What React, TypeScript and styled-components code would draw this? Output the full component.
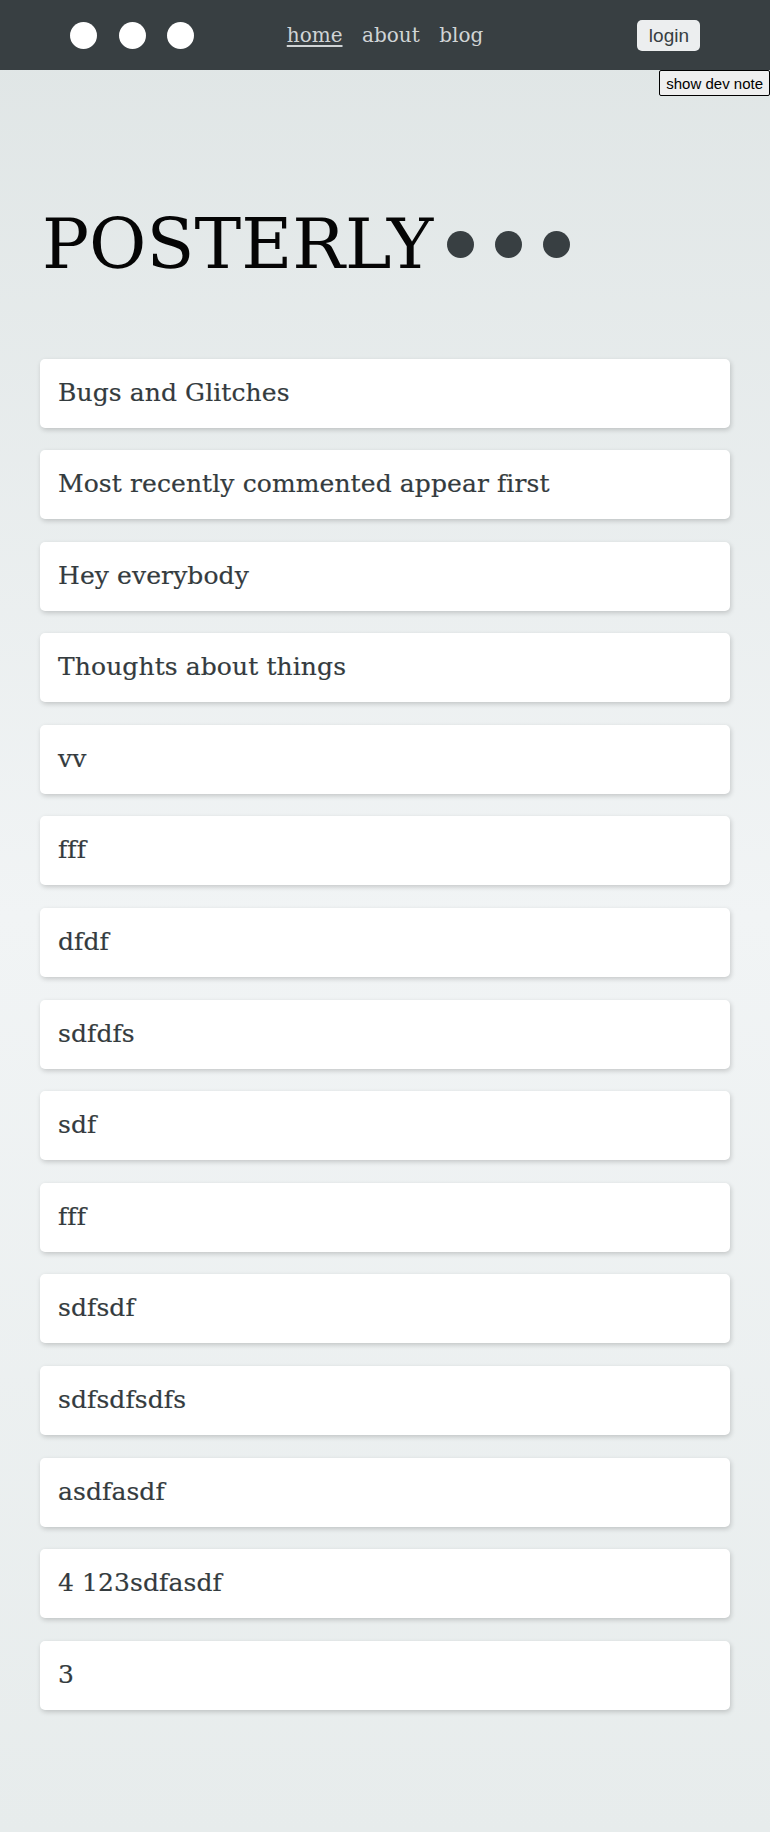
import React from "react";
import styled, { createGlobalStyle } from "styled-components";

const GlobalStyle = createGlobalStyle`
  html, body { margin: 0; padding: 0; }
  body {
    font-family: "DejaVu Serif", serif;
    background: #e6ebeb;
  }
  * { box-sizing: border-box; }
`;

const Page = styled.div`
  position: relative;
  min-height: 100vh;
  background: linear-gradient(180deg, #dfe5e5 0%, #f1f4f5 50%, #e7ecec 100%);
`;

const Header = styled.header`
  height: 70px;
  background: #383f42;
  display: grid;
  grid-template-columns: 1fr auto 1fr;
  align-items: center;
  padding: 0 70px;
`;

const Dots = styled.div<{ $gap?: number }>`
  display: flex;
  align-items: center;
  gap: ${(p) => p.$gap ?? 21.5}px;
`;

const Dot = styled.span<{ $color: string }>`
  display: block;
  width: 27px;
  height: 27px;
  border-radius: 50%;
  background: ${(p) => p.$color};
`;

const Nav = styled.nav`
  display: flex;
  gap: 19.5px;
  margin-left: 0;
  font-family: "DejaVu Serif", serif;
  font-size: 20px;
`;

const NavLink = styled.a<{ $active?: boolean }>`
  color: #d0d4d6;
  text-decoration: ${(p) => (p.$active ? "underline" : "none")};
  text-decoration-thickness: 2px;
  text-underline-offset: 3px;
  cursor: pointer;
`;

const LoginButton = styled.button`
  justify-self: end;
  font-family: "Liberation Sans", Arial, sans-serif;
  font-size: 19px;
  line-height: 23px;
  padding: 4px 11px 4px 12px;
  border: none;
  border-radius: 5px;
  background: #eceeef;
  color: #383f42;
  cursor: pointer;
`;

const DevNoteButton = styled.button`
  position: absolute;
  top: 70px;
  right: 0;
  height: 26px;
  padding: 0 6px;
  font-family: "Liberation Sans", Arial, sans-serif;
  font-size: 15px;
  color: #000;
  background: #efefef;
  border: 1px solid #000;
  border-radius: 2px;
`;

const Main = styled.main`
  padding: 133px 40px 121px;
`;

const TitleRow = styled.div`
  display: flex;
  align-items: center;
  gap: 14px;
  margin-bottom: 73.5px;
`;

const Title = styled.h1`
  margin: 0 0 0 2px;
  font-family: "DejaVu Serif", serif;
  font-weight: 400;
  font-size: 70px;
  line-height: normal;
  color: #050505;
`;

const PostList = styled.ul`
  list-style: none;
  margin: 0;
  padding: 0;
  display: flex;
  flex-direction: column;
  gap: 22.6px;
`;

const PostCard = styled.li`
  background: #fff;
  border-radius: 5px;
  box-shadow: 1px 2px 5px rgba(0, 0, 0, 0.18);
  padding: 19px 18px 21px;
  font-family: "DejaVu Serif", serif;
  font-size: 25px;
  letter-spacing: 0.1px;
  line-height: 29px;
  color: #343b3e;
  -webkit-text-stroke: 0.2px #343b3e;
`;

const posts = [
  "Bugs and Glitches",
  "Most recently commented appear first",
  "Hey everybody",
  "Thoughts about things",
  "vv",
  "fff",
  "dfdf",
  "sdfdfs",
  "sdf",
  "fff",
  "sdfsdf",
  "sdfsdfsdfs",
  "asdfasdf",
  "4 123sdfasdf",
  "3",
];

export default function App() {
  return (
    <>
      <GlobalStyle />
      <Page>
        <Header>
          <Dots>
            <Dot $color="#ffffff" />
            <Dot $color="#ffffff" />
            <Dot $color="#ffffff" />
          </Dots>
          <Nav>
            <NavLink $active>home</NavLink>
            <NavLink>about</NavLink>
            <NavLink>blog</NavLink>
          </Nav>
          <LoginButton>login</LoginButton>
        </Header>
        <DevNoteButton>show dev note</DevNoteButton>
        <Main>
          <TitleRow>
            <Title>POSTERLY</Title>
            <Dots $gap={21}>
              <Dot $color="#383f42" />
              <Dot $color="#383f42" />
              <Dot $color="#383f42" />
            </Dots>
          </TitleRow>
          <PostList>
            {posts.map((p, i) => (
              <PostCard key={i}>{p}</PostCard>
            ))}
          </PostList>
        </Main>
      </Page>
    </>
  );
}
